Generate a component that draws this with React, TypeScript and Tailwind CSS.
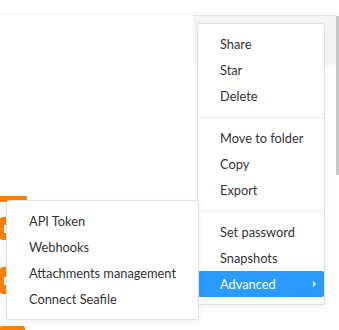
import React from "react";

const font = { fontFamily: 'Lato, "Liberation Sans", sans-serif' };

function Item({ label, active, arrow }: { label: string; active?: boolean; arrow?: boolean }) {
  return (
    <div
      className={`flex h-[26px] items-center justify-between pl-[22px] pr-[8px] pt-[2px] text-[12.8px] ${
        active ? "rounded-[2px] bg-[#2a9bfd] text-white" : "text-[#333333]"
      }`}
    >
      <span>{label}</span>
      {arrow && (
        <span className="-mt-[2px] border-y-[3px] border-l-[3px] border-y-transparent border-l-white" />
      )}
    </div>
  );
}

function Divider() {
  return <div className="mb-[7px] mt-[8px] h-px bg-[#e9ecef]" />;
}

export default function App() {
  return (
    <div className="relative h-[330px] w-[339px] overflow-hidden bg-white" style={font}>
      <div className="h-[13px]" />
      <div className="h-px bg-[#f0f0f0]" />
      <div className="flex">
        <div className="flex flex-1 flex-col items-start">
          {/* list items partially hidden behind the submenu */}
          <div className="mt-[182px] h-[6px] w-[27px] bg-[#ff8000]" />
          <div className="mt-[15px] flex h-[23px] w-[20px] items-center rounded-[3px] bg-[#ff8000] pl-[4px]">
            <div className="h-[8px] w-[10px] bg-white" />
          </div>
          <div className="mt-[27px] flex h-[27px] w-[20px] items-center rounded-[3px] bg-[#ff8000] pl-[4px]">
            <div className="h-[8px] w-[10px] bg-white" />
          </div>
          <div className="mt-[32px] h-[6px] w-[25px] rounded-[2px] bg-[#ff8000]" />
        </div>
        <div className="flex self-start">
          <div className="mt-px h-[50px] w-[143px] border-t border-[#dde0f0] bg-[#f5f5f5]" />
          <div className="mt-[2px] h-[159px] w-[3px] bg-[#c8c8c8]" />
        </div>
      </div>

      {/* main menu */}
      <div className="absolute left-[197px] top-[23px] w-[128px] rounded-[3px] border border-[#dfe1e5] bg-white py-[7px] shadow-[0_2px_6px_rgba(0,0,0,0.06)]">
        <Item label="Share" />
        <Item label="Star" />
        <Item label="Delete" />
        <Divider />
        <Item label="Move to folder" />
        <Item label="Copy" />
        <Item label="Export" />
        <Divider />
        <Item label="Set password" />
        <Item label="Snapshots" />
        <Item label="Advanced" active arrow />
      </div>

      {/* submenu */}
      <div className="absolute left-[6px] top-[200px] w-[193px] rounded-[3px] border border-[#dfe1e5] bg-white py-[7px] shadow-[0_2px_6px_rgba(0,0,0,0.06)]">
        <Item label="API Token" />
        <Item label="Webhooks" />
        <Item label="Attachments management" />
        <Item label="Connect Seafile" />
      </div>
    </div>
  );
}
